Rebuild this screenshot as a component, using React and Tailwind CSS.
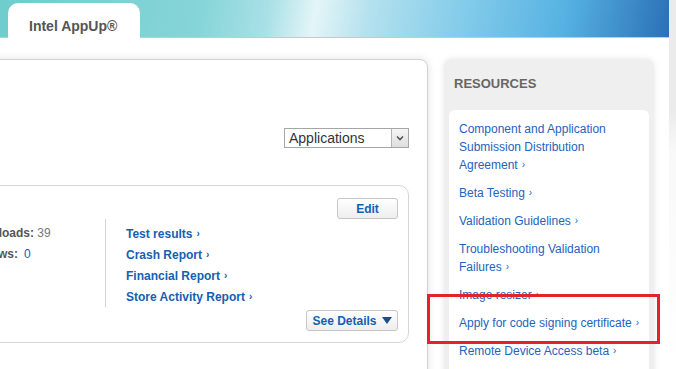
import React from "react";

const resources = [
    ["Component and Application Submission Distribution Agreement"],
    ["Beta Testing"],
    ["Validation Guidelines"],
    ["Troubleshooting Validation Failures"],
    ["Image resizer"],
    ["Apply for code signing certificate"],
    ["Remote Device Access beta"],
];

const reports = ["Test results", "Crash Report", "Financial Report", "Store Activity Report"];

function Chevron() {
    return <span className="ml-[4px] text-[10px] align-[1px]">›</span>;
}

export default function App() {
    return (
        <div className="relative w-[676px] h-[369px] overflow-hidden bg-white flex font-['Liberation_Sans',Arial,sans-serif]">
            <div className="w-[669px] shrink-0 flex flex-col">
                {/* header banner */}
                <div className="h-[38px] shrink-0 flex items-end pl-[8px] border-b border-[#c9c9c9] bg-[linear-gradient(100deg,#6fcdcd_0%,#86d5d8_30%,#a9e0e6_40%,#e4f5f8_47%,#b4e1ee_55%,#86cdea_68%,#56b2e2_84%,#2b70b6_100%)]">
                    <div className="w-[132px] h-[35px] -mb-[1px] bg-white rounded-t-[10px] pl-[21px] pt-[13px] text-[14px] font-bold text-[#555]">
                        Intel AppUp®
                    </div>
                </div>

                <div className="flex items-start pt-[21px]">
                    {/* main panel */}
                    <div className="ml-[-12px] w-[440px] h-[330px] shrink-0 bg-white border border-[#d2d2d2] rounded-tr-[8px] shadow-[0_0_8px_rgba(0,0,0,0.12)] pr-[18px] pt-[68px]">
                        <div className="flex justify-end">
                            <div className="w-[125px] h-[20px] border border-[#a6a6a6] flex items-center">
                                <span className="flex-1 pl-[4px] text-[14px] text-[#333] leading-none">Applications</span>
                                <div className="w-[17px] h-[18px] border-l border-[#b4b4b4] bg-[linear-gradient(#f6f6f6,#dedede)] flex items-center justify-center">
                                    <svg width="8" height="6" viewBox="0 0 8 6">
                                        <path d="M1 1.5 L4 4.5 L7 1.5" fill="none" stroke="#555" strokeWidth="1.6" />
                                    </svg>
                                </div>
                            </div>
                        </div>

                        {/* app card */}
                        <div className="mt-[37px] ml-[-2px] h-[158px] border border-[#d6d6d6] rounded-[10px] pt-[12px] pr-[10px]">
                            <div className="flex justify-end">
                                <button className="w-[61px] h-[21px] border border-[#c6c6c6] rounded-[3px] bg-[linear-gradient(#ffffff,#eeeeee)] text-[12px] font-bold text-[#1560b0]">
                                    Edit
                                </button>
                            </div>
                            <div className="flex">
                                <div className="ml-[-22px] w-[140px] h-[88px] border-r border-[#d2d2d2] pt-[4px] text-[12px]">
                                    <div className="h-[21px] leading-[21px]">
                                        <span className="font-bold text-[#555]">Downloads:</span>
                                        <span className="text-[#777]"> 39</span>
                                    </div>
                                    <div className="h-[21px] leading-[21px]">
                                        <span className="font-bold text-[#555]">Reviews:</span>
                                        <span className="ml-[6px] text-[#1560b0]">0</span>
                                    </div>
                                </div>
                                <div className="pl-[20px] pt-[4px] text-[12px] font-bold text-[#1560b0]">
                                    {reports.map((r) => (
                                        <div key={r} className="h-[21px] leading-[21px]">
                                            {r}
                                            <Chevron />
                                        </div>
                                    ))}
                                </div>
                            </div>
                            <div className="flex justify-end mt-[3px]">
                                <button className="w-[92px] h-[21px] border border-[#c6c6c6] rounded-[3px] bg-[linear-gradient(#ffffff,#eeeeee)] text-[12px] font-bold text-[#1560b0] flex items-center justify-center gap-[5px]">
                                    See Details
                                    <svg width="10" height="7" viewBox="0 0 10 7">
                                        <path d="M0 0 H10 L5 7 Z" fill="#1a4f8f" />
                                    </svg>
                                </button>
                            </div>
                        </div>
                    </div>

                    {/* resources sidebar */}
                    <div className="ml-[16px] w-[210px] h-[320px] shrink-0 bg-[#efefef] rounded-t-[8px] shadow-[0_0_6px_rgba(0,0,0,0.1)] pt-[17px]">
                        <div className="pl-[10px] text-[13px] leading-[16px] font-bold text-[#666]">RESOURCES</div>
                        <div className="mt-[18px] ml-[5px] w-[200px] h-[300px] bg-white rounded-t-[6px] pl-[10px] pr-[8px] pt-[10px] flex flex-col gap-[10px]">
                            {resources.map(([label]) => (
                                <div key={label} className="text-[12px] leading-[18px] text-[#2463bd]">
                                    {label}
                                    <Chevron />
                                </div>
                            ))}
                        </div>
                    </div>
                </div>
            </div>
            <div className="flex-1 bg-[linear-gradient(180deg,#ebebeb_0px,#ebebeb_110px,#f8f8f8_150px,#ffffff_100%)]" />

            {/* annotation box */}
            <div className="absolute left-[427px] top-[294px] w-[233px] h-[50px] border-[3px] border-[#e3222a]" />
        </div>
    );
}
